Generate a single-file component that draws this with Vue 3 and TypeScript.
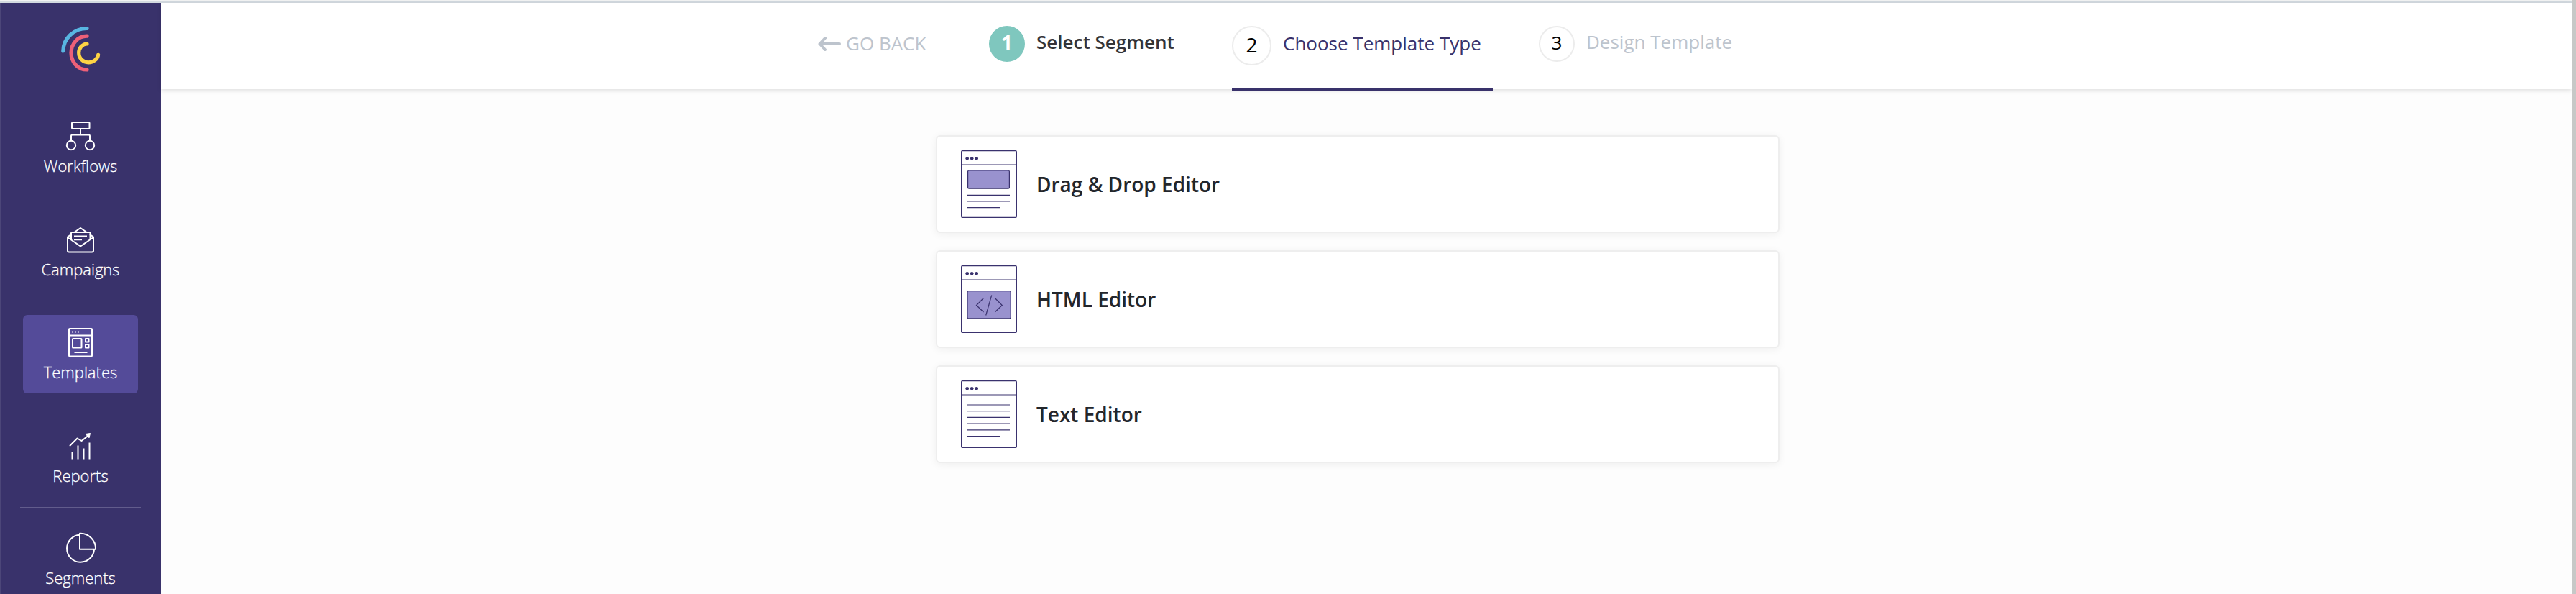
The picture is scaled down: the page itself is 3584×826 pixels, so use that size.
<script setup lang="ts">
interface NavItem { id: string; label: string; active?: boolean; divided?: boolean }
interface Editor { id: string; label: string; lines: { y: number; end: number }[] }

const navItems: NavItem[] = [
  { id: 'workflows', label: 'Workflows' },
  { id: 'campaigns', label: 'Campaigns' },
  { id: 'templates', label: 'Templates', active: true },
  { id: 'reports', label: 'Reports' },
  { id: 'segments', label: 'Segments', divided: true },
]

const editors: Editor[] = [
  { id: 'drag', label: 'Drag & Drop Editor', lines: [{ y: 62.3, end: 68 }, { y: 71, end: 68 }, { y: 79.7, end: 55 }] },
  { id: 'html', label: 'HTML Editor', lines: [] },
  {
    id: 'text',
    label: 'Text Editor',
    lines: [{ y: 34, end: 68 }, { y: 42.7, end: 68 }, { y: 51.4, end: 68 }, { y: 60.1, end: 68 }, { y: 68.8, end: 68 }, { y: 77.5, end: 55 }],
  },
]
</script>

<template>
  <div class="window">
    <div class="chrome"></div>
    <div class="app">
      <aside class="sidebar">
        <svg class="logo" viewBox="0 0 56 64" fill="none" stroke-width="5.2" stroke-linecap="round">
          <path d="M36 3.500C18 3.500 3.200 17 2.800 35" stroke="#58b5e1" />
          <path d="M36 14.200C23 14.200 14 25 14 37.500S23 61 36 61" stroke="#ee6078" />
          <path d="M36 25C29.500 25 24.700 31 24.700 37.500C24.700 45 30.500 50.800 38 50.800C45 50.800 50.800 46 51.600 40.300" stroke="#fdd344" />
        </svg>
        <nav class="nav">
          <a v-for="item in navItems" :key="item.id" class="nav-item" :class="{ active: item.active, divided: item.divided }">
            <svg class="nav-icon" viewBox="0 0 44 44" fill="none" stroke="#fff" stroke-width="2" stroke-linejoin="round">
              <template v-if="item.id === 'workflows'">
                <rect x="10" y="3" width="24.500" height="9" rx="1" />
                <path d="M22 12v8.500M9 28v-6q0-1.500 1.500-1.500h23q1.500 0 1.500 1.500v6" />
                <circle cx="9" cy="35" r="6.200" /><circle cx="35" cy="35" r="6.200" />
              </template>
              <g v-else-if="item.id === 'campaigns'" transform="translate(0 1.500)">
                <path d="M9 13.500L4 17v19q0 2 2 2h32q2 0 2-2V17l-5-3.500M4 17.500L22 30l18-12.500" />
                <path d="M9 20.500V11.500q0-1 1-1h24.500q1 0 1 1v9M14 10l8-5.500 8 5.500M13 16h18M13 20.700h11" />
              </g>
              <template v-else-if="item.id === 'templates'">
                <rect x="6" y="3" width="32" height="38.500" rx="1" />
                <path d="M6 12.500h32M13.500 36h18" />
                <path d="M10 7.500h2M14 7.500h2M18 7.500h2" />
                <rect x="11" y="17" width="12.500" height="12.500" rx=".5" />
                <rect x="29" y="17" width="4.500" height="4.500" /><rect x="29" y="25" width="4.500" height="4.500" />
              </template>
              <template v-else-if="item.id === 'reports'">
                <path d="M7.500 21.500L17.500 11.500l6 3.500L33 7.500" stroke-linecap="round" />
                <path d="M29 5.500l6.500-1-1.500 6.300z" fill="#fff" stroke-width="1" />
                <path d="M10.500 30v10.500M18.500 21.500v19M26.500 25.500v15M34.500 17.500v23" />
              </template>
              <template v-else>
                <path d="M21 3.800A19 19 0 1 0 41 24.100" />
                <path d="M21 1.800A21 21 0 0 1 43 23.800H21Z" />
              </template>
            </svg>
            <span class="nav-label">{{ item.label }}</span>
          </a>
        </nav>
      </aside>
      <section class="content">
        <header class="header">
          <a class="back">
            <svg class="arrow" viewBox="0 0 32 20" fill="none" stroke="#bdc4cd" stroke-width="4" stroke-linecap="round" stroke-linejoin="round">
              <path d="M30 10H2.500M10 2L2.500 10l7.500 8" />
            </svg>
            <span>GO BACK</span>
          </a>
          <div class="step done"><span class="badge">1</span><span class="step-label">Select Segment</span></div>
          <div class="step current"><span class="badge">2</span><span class="step-label">Choose Template Type</span></div>
          <div class="step upcoming"><span class="badge">3</span><span class="step-label">Design Template</span></div>
        </header>
        <main class="cards">
          <article v-for="editor in editors" :key="editor.id" class="card">
            <svg class="preview" viewBox="0 0 78 94" fill="none" stroke="#3a326e" stroke-width="1.200">
              <rect x=".6" y=".6" width="76.800" height="92.800" rx="1.500" />
              <path d="M.6 20h76.800" />
              <g fill="#3a326e" stroke="none"><circle cx="8.700" cy="11.300" r="2.300" /><circle cx="15.200" cy="11.300" r="2.300" /><circle cx="21.700" cy="11.300" r="2.300" /></g>
              <rect v-if="editor.id === 'drag'" x="9.600" y="28" width="57.800" height="25.200" rx="1.500" fill="#9992ce" />
              <template v-if="editor.id === 'html'">
                <rect x="9" y="35.600" width="60.200" height="38.200" rx="1.500" fill="#9992ce" />
                <path d="M31.500 45.500L21.500 55.500l10 9.500M42.700 41.500L34.700 69.500M47.300 45.500l10 10-10 9.500" />
              </template>
              <path v-for="line in editor.lines" :key="line.y" :d="`M8 ${line.y}H${line.end}`" />
            </svg>
            <span class="card-label">{{ editor.label }}</span>
          </article>
        </main>
      </section>
      <div class="edge"></div>
    </div>
  </div>
</template>

<style>
body { margin: 0; }
</style>

<style scoped>
.window { width: 3584px; height: 826px; overflow: hidden; font-family: "Open Sans", "Noto Sans", sans-serif; display: flex; flex-direction: column; background: #fdfdfd; }
.window * { box-sizing: border-box; }
.chrome { flex: none; width: 3578px; height: 4px; background: #f1f2f2; border-bottom: 2px solid #d3dae0; }
.app { flex: 1; min-height: 0; display: flex; }
.sidebar { width: 224px; flex: none; background: #39326b; border-left: 1px solid #4c4679; overflow: hidden; }
.logo { display: block; width: 56px; height: 64px; margin: 32px 0 0 84px; }
.nav { margin: 51px 28px 0 27px; display: flex; flex-direction: column; gap: 34.500px; }
.nav-item { height: 109px; margin: 0 4px; padding-top: 16px; border-radius: 6px; display: flex; flex-direction: column; align-items: center; flex: none; }
.nav-item.active { background: #544b99; }
.nav-item.divided { margin: -20px 0 0; padding-top: 33px; height: 126px; border-top: 2px solid #625c8c; border-radius: 0; }
.nav-icon { width: 44px; height: 44px; flex: none; }
.nav-label { color: #fff; font-size: 22px; font-weight: 300; line-height: 30px; margin-top: 4px; -webkit-text-stroke: .3px #fff; }
.content { flex: 1; min-width: 0; }
.header { height: 120px; background: #fff; display: flex; align-items: flex-start; padding: 32px 0 0 914px; box-shadow: 0 2px 6px rgba(0, 0, 0, .12); font-size: 26px; color: #bdc4cd; white-space: nowrap; }
.back { display: flex; align-items: center; width: 238px; height: 50px; }
.back span { line-height: 46px; margin: -2px 0 0 7px; }
.arrow { width: 32px; height: 20px; }
.step { display: flex; align-items: flex-start; }
.badge { width: 50px; height: 50px; border-radius: 50%; display: flex; justify-content: center; line-height: 42px; border: 2px solid #ececec; color: #000; flex: none; }
.step-label { line-height: 44px; margin-left: 16px; }
.done { width: 338px; color: #343438; font-weight: 600; }
.done .badge { background: #7fc7be; border-color: #7fc7be; color: #fff; font-size: 28px; font-weight: 700; }
.current { width: 363px; height: 91px; border-bottom: 4px solid #39326b; color: #39326b; }
.current .badge { width: 55px; height: 55px; font-size: 28px; line-height: 48px; }
.current .step-label { line-height: 48px; }
.upcoming { margin-left: 64px; }
.cards { width: 1174px; margin: 64px 0 0 1078px; display: flex; flex-direction: column; gap: 24px; }
.card { height: 136px; border: 2px solid #eee; border-radius: 6px; background: #fff; box-shadow: 0 2px 12px rgba(0, 0, 0, .06); display: flex; align-items: center; padding: 0 33px; background-clip: padding-box; }
.preview { width: 78px; height: 94px; flex: none; }
.card-label { margin: 0 0 0 27px; font-size: 28px; font-weight: 600; color: #23262b; line-height: 38px; }
.edge { width: 6px; flex: none; margin-top: -4px; background: #c7c8c7; border-left: 1px solid #999b9b; }
</style>
